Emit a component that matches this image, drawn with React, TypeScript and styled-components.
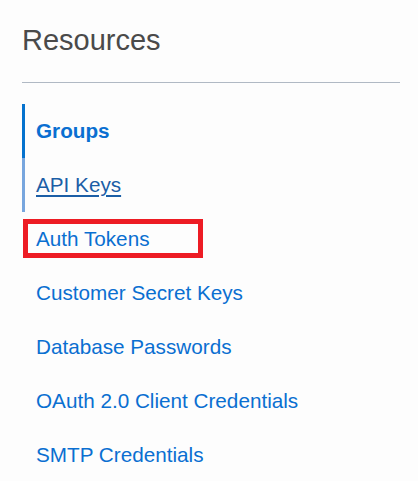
import React from "react";
import styled, { createGlobalStyle } from "styled-components";

const GlobalStyle = createGlobalStyle`
  html, body {
    margin: 0;
    padding: 0;
    background: #fdfdfd;
  }
  body {
    font-family: "Liberation Sans", Arial, sans-serif;
  }
`;

const Panel = styled.nav`
  width: 418px;
  height: 481px;
  box-sizing: border-box;
  padding: 24px 18px 0 22px;
  overflow: hidden;
`;

const Title = styled.h1`
  margin: 0;
  font-size: 29px;
  line-height: 33px;
  font-weight: 400;
  color: #4a4a4a;
`;

const Divider = styled.hr`
  margin: 25px 0 21px;
  border: 0;
  height: 1px;
  background: #b0b9c4;
`;

const List = styled.ul`
  list-style: none;
  margin: 0;
  padding: 0;
`;

type ItemState = "active" | "hover" | "idle";

const barColor: Record<ItemState, string> = {
  active: "#0572ce",
  hover: "#78a6de",
  idle: "transparent",
};

const Item = styled.li<{ $state: ItemState }>`
  position: relative;
  height: 54px;
  display: flex;
  align-items: center;
  border-left: 3px solid ${(p) => barColor[p.$state]};
  padding-left: 11px;
`;

const Link = styled.a<{ $state: ItemState }>`
  font-size: 20.7px;
  line-height: 24px;
  color: ${(p) => (p.$state === "hover" ? "#1b5ea6" : "#0a6fd1")};
  font-weight: ${(p) => (p.$state === "active" ? 700 : 400)};
  text-decoration: ${(p) => (p.$state === "hover" ? "underline" : "none")};
  text-decoration-thickness: 2px;
  text-underline-offset: 3px;
  cursor: pointer;
`;

const Highlight = styled.span`
  position: absolute;
  left: -2px;
  top: 7px;
  width: 180px;
  height: 39px;
  box-sizing: border-box;
  border: 5px solid #ed1c24;
  pointer-events: none;
`;

const items: { label: string; state: ItemState; marked?: boolean }[] = [
  { label: "Groups", state: "active" },
  { label: "API Keys", state: "hover" },
  { label: "Auth Tokens", state: "idle", marked: true },
  { label: "Customer Secret Keys", state: "idle" },
  { label: "Database Passwords", state: "idle" },
  { label: "OAuth 2.0 Client Credentials", state: "idle" },
  { label: "SMTP Credentials", state: "idle" },
];

export default function App() {
  return (
    <>
      <GlobalStyle />
      <Panel>
        <Title>Resources</Title>
        <Divider />
        <List>
          {items.map((it) => (
            <Item key={it.label} $state={it.state}>
              <Link $state={it.state}>{it.label}</Link>
              {it.marked && <Highlight />}
            </Item>
          ))}
        </List>
      </Panel>
    </>
  );
}
